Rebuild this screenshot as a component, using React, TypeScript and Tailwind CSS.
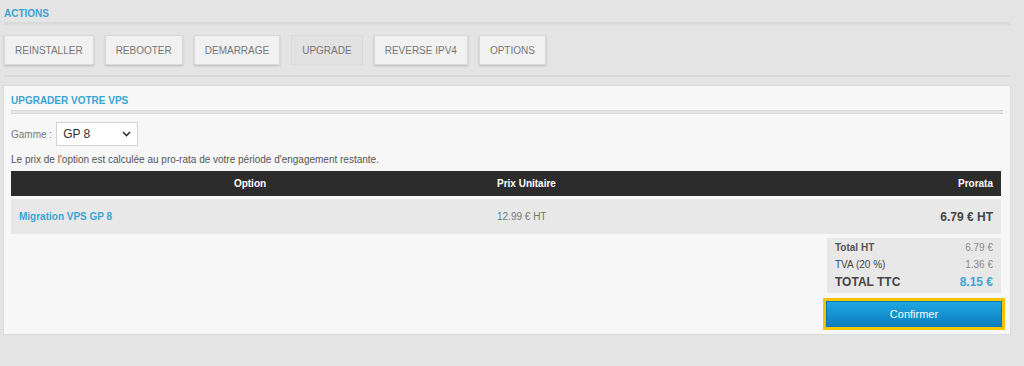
import React from "react"

const actions = ["REINSTALLER", "REBOOTER", "DEMARRAGE", "UPGRADE", "REVERSE IPV4", "OPTIONS"]

function ActionButton({ label, active }: { label: string; active?: boolean }) {
  return (
    <button
      className={`h-[30px] px-[10px] text-[10px] text-[#777] border ${
        active
          ? "bg-[#e2e2e2] border-[#dadada]"
          : "bg-[#f1f1f1] border-[#d9d9d9] shadow-[0_1px_2px_rgba(0,0,0,0.18)]"
      }`}
    >
      {label}
    </button>
  )
}

export default function App() {
  return (
    <div className="w-[1024px] h-[366px] bg-[#e4e4e4] font-['Liberation_Sans',Arial,sans-serif] overflow-hidden">
      <div className="pl-[4px] pr-[14px] pt-[8px]">
        <h2 className="text-[10px] font-bold text-[#3aa4d2] leading-[12px]">ACTIONS</h2>
        <div className="mt-[2px] h-[3px] bg-[#d9d9d9]" />
        <div className="flex gap-[11px] mt-[10px]">
          {actions.map((a) => (
            <ActionButton key={a} label={a} active={a === "UPGRADE"} />
          ))}
        </div>
        <div className="mt-[10px] h-[2px] bg-[#d9d9d9]" />
      </div>

      <div className="ml-[3px] mt-[8px] w-[1008px] h-[250px] bg-[#f7f7f7] border border-[#dcdcdc] px-[7px] pt-[9px]">
        <h3 className="text-[10px] font-bold text-[#3aa4d2] leading-[12px]">UPGRADER VOTRE VPS</h3>
        <div className="mt-[3px] h-[4px] border-y border-[#d6d6d6] bg-[#e6e6e6]" />

        <div className="flex items-center mt-[8px] gap-[4px]">
          <span className="text-[10px] text-[#777]">Gamme :</span>
          <div className="w-[82px] h-[24px] bg-white border border-[#d3d3d3] flex items-center justify-between pl-[6px] pr-[6px]">
            <span className="text-[12px] text-[#333]">GP 8</span>
            <svg width="9" height="6" viewBox="0 0 9 6">
              <path d="M1 1l3.5 3.5L8 1" stroke="#333" strokeWidth="1.6" fill="none" />
            </svg>
          </div>
        </div>

        <p className="mt-[8px] text-[10px] text-[#555] leading-[12px]">
          Le prix de l'option est calculée au pro-rata de votre période d'engagement restante.
        </p>

        <div className="mt-[5px] w-[990px]">
          <div className="grid grid-cols-[478px_1fr_200px] h-[25px] items-center bg-[#2c2c2c] text-white text-[10px] font-bold">
            <div className="text-center">Option</div>
            <div className="pl-[8px]">Prix Unitaire</div>
            <div className="text-right pr-[8px]">Prorata</div>
          </div>
          <div className="mt-[3px] grid grid-cols-[478px_1fr_200px] h-[35px] items-center bg-[#e8e8e8] text-[10px]">
            <div className="pl-[8px] font-bold text-[#3aa4d2]">Migration VPS GP 8</div>
            <div className="pl-[8px] text-[#777]">12.99 € HT</div>
            <div className="text-right pr-[8px] text-[12px] font-bold text-[#444]">6.79 € HT</div>
          </div>

          <div className="flex justify-end mt-[4px]">
            <div className="w-[174px] bg-[#e8e8e8] px-[8px] pt-[1px] pb-[2px] text-[10px]">
              <div className="flex justify-between h-[17px] items-center">
                <span className="font-bold text-[#555]">Total HT</span>
                <span className="text-[#888]">6.79 €</span>
              </div>
              <div className="flex justify-between h-[17px] items-center">
                <span className="text-[#444]">TVA (20 %)</span>
                <span className="text-[#888]">1.36 €</span>
              </div>
              <div className="flex justify-between h-[18px] items-center">
                <span className="text-[12px] font-bold text-[#444]">TOTAL TTC</span>
                <span className="text-[12px] font-bold text-[#3aa4d2]">8.15 €</span>
              </div>
            </div>
          </div>

          <div className="flex justify-end mt-[5px] mr-[-4px]">
            <div className="border-[3px] border-[#f5c400]">
              <button className="w-[176px] h-[26px] bg-gradient-to-b from-[#1fa6e0] to-[#0b7fbf] text-white text-[11px] border border-[#0a76b2]">
                Confirmer
              </button>
            </div>
          </div>
        </div>
      </div>
    </div>
  )
}
